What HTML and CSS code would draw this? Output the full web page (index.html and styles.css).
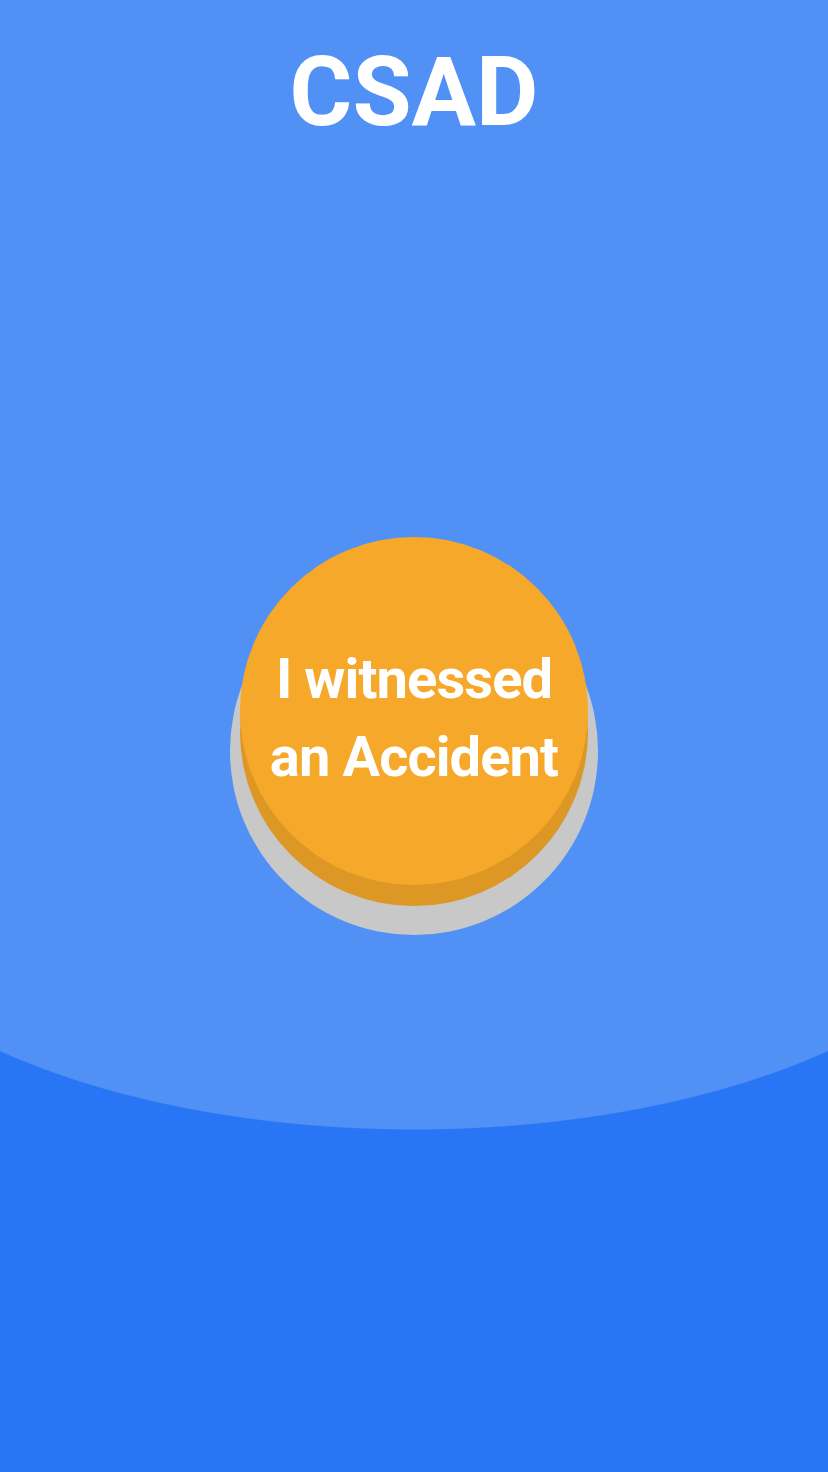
FILE: index.html
```html
<!DOCTYPE html>
<html lang="en">
<head>
<meta charset="utf-8">
<title>CSAD</title>
<link rel="stylesheet" href="styles.css">
</head>
<body>
<main class="screen">
  <h1 class="title">CSAD</h1>
  <div class="button-wrap">
    <div class="btn-shadow"></div>
    <div class="btn-rim"></div>
    <button class="btn-face" type="button">I witnessed<br>an Accident</button>
  </div>
</main>
</body>
</html>
```

FILE: styles.css
```css
html, body {
  margin: 0;
  padding: 0;
}
body {
  width: 828px;
  height: 1472px;
  overflow: hidden;
  background:
    radial-gradient(600px 283px at 414px 847px, #5191f5 99.6%, rgba(81,145,245,0) 100%),
    linear-gradient(to bottom, #5191f5 0, #5191f5 847px, #2875f5 847px, #2875f5 100%);
  font-family: Roboto, "Liberation Sans", sans-serif;
}
.screen {
  display: flex;
  flex-direction: column;
  align-items: center;
}
.title {
  margin: 0;
  padding-top: 37px;
  color: #ffffff;
  font-size: 96px;
  line-height: 110px;
  font-weight: 700;
  letter-spacing: 0;
}
.button-wrap {
  margin-top: 390px;
  display: grid;
  justify-items: center;
  align-items: start;
}
.btn-shadow, .btn-rim, .btn-face {
  grid-area: 1 / 1;
  border-radius: 50%;
}
.btn-shadow {
  width: 368px;
  height: 368px;
  margin-top: 30px;
  background: #c8c8c8;
}
.btn-rim {
  width: 348px;
  height: 348px;
  margin-top: 21px;
  background: #dc9725;
}
.btn-face {
  width: 348px;
  height: 348px;
  border: 0;
  padding: 14px 0 0 0;
  background: #f5a82a;
  color: #ffffff;
  font-family: Roboto, "Liberation Sans", sans-serif;
  font-size: 56px;
  font-weight: 700;
  line-height: 78px;
  letter-spacing: -0.9px;
  text-align: center;
}
```
